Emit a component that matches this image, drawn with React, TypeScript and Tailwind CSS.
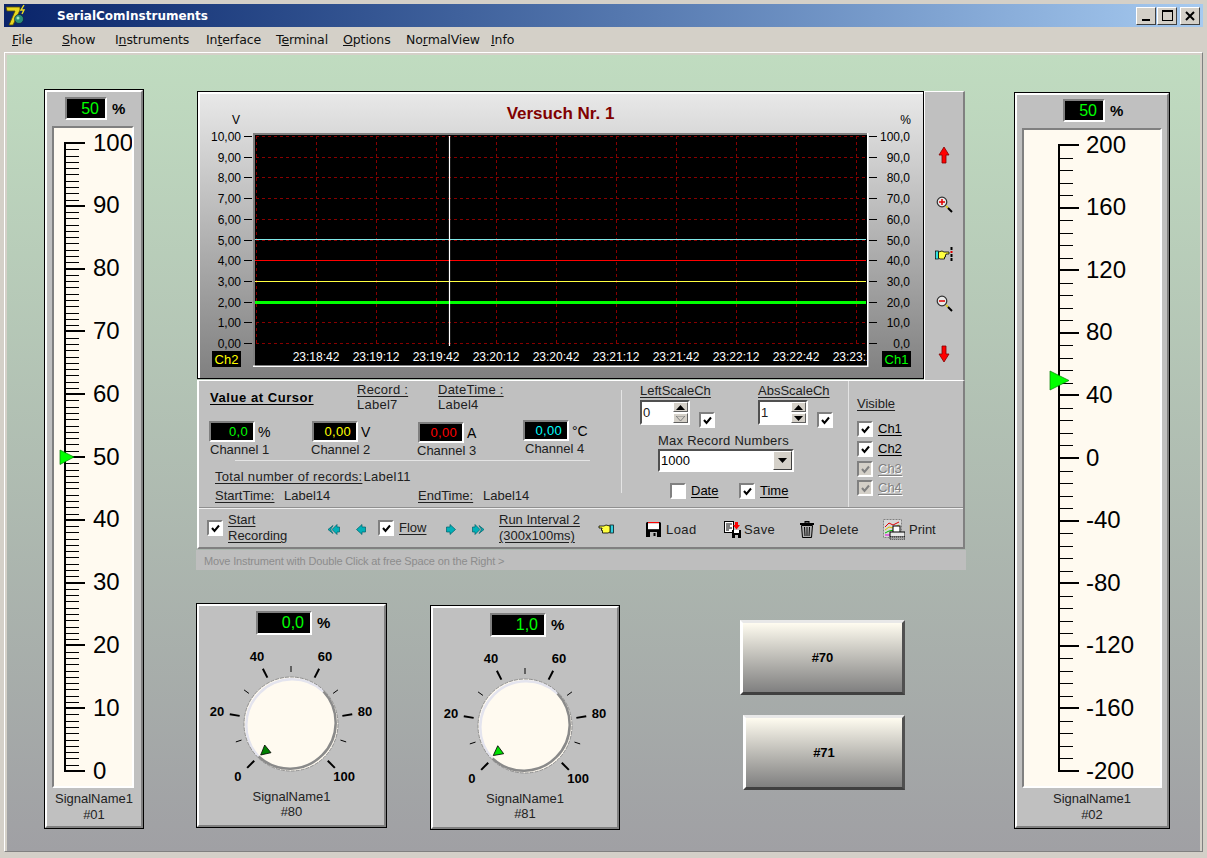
import React from "react";

const Check = ({ color = "#000" }: { color?: string }) => (
  <svg width="9" height="9" viewBox="0 0 9 9"><path d="M1 4 L3.5 7 L8 1.5" fill="none" stroke={color} strokeWidth="2" /></svg>
);

const CheckBox = ({ checked = true, disabled = false, className = "" }: { checked?: boolean; disabled?: boolean; className?: string }) => (
  <div className={`w-4 h-4 shrink-0 flex items-center justify-center border-2 border-t-[#808080] border-l-[#808080] border-r-white border-b-white ${disabled ? "bg-[#d4d0c8]" : "bg-white"} ${className}`}>
    {checked && <Check color={disabled ? "#808080" : "#000"} />}
  </div>
);

const Display = ({ value, color, w, h, size = "lg" }: { value: string; color: string; w: string; h: string; size?: "lg" | "sm" }) => (
  <div className={`${w} ${h} shrink-0 border-2 border-t-[#808080] border-l-[#808080] border-r-white border-b-white bg-black flex items-center justify-end ${size === "lg" ? "pr-[6px] text-[16px]" : "pr-[5px] text-[13px] tracking-[0.3px]"} ${color}`}>
    {value}
  </div>
);

const Panel = ({ className = "", children }: { className?: string; children: React.ReactNode }) => (
  <div className={`border border-black shrink-0 ${className}`}>
    <div className="h-full border-2 border-t-white border-l-white border-r-[#808080] border-b-[#808080] bg-[#c0c0c0] flex flex-col">{children}</div>
  </div>
);

type GaugeProps = {
  cls: string; valueMl: string; pt: string; box: string; vb: string;
  lineX: number; majorEnd: number; minorEnd: number; textX: number; top: number; bottom: number;
  labels: string[]; minors: number; pointer: string; svgW: number; svgH: number;
};

const Gauge = (p: GaugeProps) => {
  const majors = p.labels.length - 1;
  const step = (p.bottom - p.top) / (majors * p.minors);
  const ticks = Array.from({ length: majors * p.minors + 1 }, (_, i) => i);
  return (
    <Panel className={p.cls}>
      <div className={`flex items-center ${p.valueMl} ${p.pt}`}>
        <Display value="50" color="text-[#00ff00]" w="w-[42px]" h="h-[23px]" />
        <span className="ml-[5px] text-[15px] font-bold">%</span>
      </div>
      <div className={`${p.box} mt-[6px] border-2 border-t-[#808080] border-l-[#808080] border-r-white border-b-white bg-[#fffaf0]`}>
        <svg width={p.svgW} height={p.svgH} viewBox={p.vb} className="block">
          <rect x={p.lineX - 1} y={p.top - 1} width="2" height={p.bottom - p.top + 2} fill="#000" />
          {ticks.map((i) => (
            <rect key={i} x={p.lineX} y={Math.round(p.top + i * step) - (i % p.minors === 0 ? 1 : 0)} width={(i % p.minors === 0 ? p.majorEnd : p.minorEnd) - p.lineX} height={i % p.minors === 0 ? 2 : 1} fill="#000" />
          ))}
          {p.labels.map((l, i) => (
            <text key={l} x={p.textX} y={p.top + i * (p.bottom - p.top) / majors + 7.5} fontSize="24" fill="#000">{l}</text>
          ))}
          <polygon points={p.pointer} fill="#00ff00" stroke="#008000" strokeWidth="0.7" />
        </svg>
      </div>
      <div className="pt-[3px] text-center text-[13px] leading-[16px] text-[#222]">
        <div>SignalName1</div>
        <div>{p.labels[0] === "100" ? "#01" : "#02"}</div>
      </div>
    </Panel>
  );
};

const Dial = ({ value, num, display, ptr, cls }: { value: number; num: string; display: string; ptr: string; cls: string }) => {
  const pol = (a: number, r: number) => {
    const t = (a * Math.PI) / 180;
    return [r * Math.sin(t), -r * Math.cos(t)];
  };
  const angles = [0, 10, 20, 30, 40, 50, 60, 70, 80, 90, 100];
  return (
    <Panel className={cls}>
      <div className="flex items-center pt-[5px] pl-[57px]">
        <Display value={display} color="text-[#00ff00]" w="w-[56px]" h="h-[24px]" />
        <span className="ml-[5px] text-[15px] font-bold">%</span>
      </div>
      <svg width="185" height="150" viewBox="-92 -85 185 150" className="block mt-[4px]">
        {angles.map((v) => {
          const a = -135 + v * 2.7;
          const major = v % 20 === 0;
          const [x1, y1] = pol(a, 52);
          const [x2, y2] = pol(a, major ? 62 : 58);
          const [lx, ly] = pol(a, 75);
          return (
            <g key={v}>
              <line x1={x1} y1={y1} x2={x2} y2={y2} stroke="#000" strokeWidth={major ? 2 : 1} />
              {major && <text x={lx} y={ly + 4} textAnchor="middle" fontSize="13" fontWeight="700" fill="#000">{v}</text>}
            </g>
          );
        })}
        <circle r="47" fill="#fffaf0" />
        <path d="M -32.5 32.5 A 46 46 0 0 1 32.5 -32.5" fill="none" stroke="#e4e4ee" strokeWidth="2.5" />
        <path d="M 32.5 -32.5 A 46 46 0 0 1 -32.5 32.5" fill="none" stroke="#8a8a8a" strokeWidth="2.5" />
        <circle r="47" fill="none" stroke="#909090" strokeWidth="1" strokeDasharray="4 1" />
        <polygon points="-30.3,31 -26.3,21 -20,28.7" transform={`rotate(${value * 2.7})`} fill={ptr} stroke="#000" strokeWidth="0.8" />
      </svg>
      <div className="text-center text-[13px] leading-[15px] text-[#222]">
        <div>SignalName1</div>
        <div>{num}</div>
      </div>
    </Panel>
  );
};

const Logo = () => (
  <svg width="24" height="23" viewBox="0 0 24 23" className="shrink-0">
    <path d="M2 3 H16 V6 L9 21 H5 L11 7 H3 Z" fill="#e8d820" stroke="#5a5000" strokeWidth="0.8" />
    <path d="M20 1 L17 6 H20 L18 10" fill="none" stroke="#f0e020" strokeWidth="1.4" />
    <circle cx="15" cy="15" r="4.5" fill="#2a9078" stroke="#113" strokeWidth="0.6" />
    <circle cx="14" cy="14" r="1.5" fill="#9fe0c0" />
  </svg>
);

const ArrowV = ({ up }: { up?: boolean }) => (
  <svg width="12" height="18" viewBox="0 0 12 18" className="block">
    <path d={up ? "M6 1 L11 9 H8 V17 H4 V9 H1 Z" : "M6 17 L11 9 H8 V1 H4 V9 H1 Z"} fill="#ff0000" stroke="#800000" strokeWidth="0.8" />
  </svg>
);

const Magnifier = ({ plus }: { plus?: boolean }) => (
  <svg width="17" height="17" viewBox="0 0 17 17" className="block">
    <line x1="10" y1="10" x2="12" y2="12" stroke="#d8c820" strokeWidth="2" />
    <line x1="12" y1="12" x2="16" y2="16" stroke="#000" strokeWidth="2" />
    <circle cx="6" cy="6" r="4.8" fill="#e8e8e8" stroke="#303030" strokeWidth="1.2" />
    <line x1="3" y1="6" x2="9" y2="6" stroke="#e00000" strokeWidth="1.5" />
    {plus && <line x1="6" y1="3" x2="6" y2="9" stroke="#e00000" strokeWidth="1.5" />}
  </svg>
);

const HandRight = () => (
  <svg width="18" height="15" viewBox="0 0 18 15" className="block">
    <rect x="0.5" y="4" width="3" height="8" fill="#30e0e0" stroke="#000" strokeWidth="0.7" />
    <path d="M3.5 5 L7 4 L9 5 H14 V7 H11 V8 H10.5 V10 H9.5 V12 H5 L3.5 11 Z" fill="#ffff40" stroke="#000" strokeWidth="0.8" />
    <rect x="15.5" y="0" width="2" height="3" fill="#000" />
    <rect x="15.5" y="4" width="2" height="2" fill="#e00000" />
    <rect x="15.5" y="7" width="2" height="3" fill="#000" />
    <rect x="15.5" y="11" width="2" height="3" fill="#000" />
  </svg>
);

const HandLeft = () => (
  <svg width="16" height="12" viewBox="0 0 16 12" className="block shrink-0 ml-[19px] mt-[2px]">
    <rect x="12" y="2" width="3.5" height="8" fill="#30d0e0" stroke="#000" strokeWidth="0.7" />
    <path d="M12 3 L8 2 L6 3 H1 V5 H4 V6 H3.5 V7.5 H4.5 V10 H10 L12 9 Z" fill="#ffff40" stroke="#000" strokeWidth="0.8" />
  </svg>
);

const Teal = ({ dir, double, ml }: { dir: "l" | "r"; double?: boolean; ml: string }) => (
  <svg width={double ? 13 : 10} height="11" viewBox={double ? "0 0 13 11" : "0 0 10 11"} className={`block shrink-0 mt-[2px] ${ml}`}>
    <g transform={dir === "l" ? `translate(${double ? 13 : 10},0) scale(-1,1)` : undefined}>
      {double ? (
        <>
          <path d="M0.5 3 H3 V0.5 L8 5.5 L3 10.5 V8 H0.5 Z" fill="#00b0b8" stroke="#006068" strokeWidth="0.7" />
          <path d="M7 1.5 L12 5.5 L7 9.5 L9.5 5.5 Z" fill="#00b0b8" stroke="#006068" strokeWidth="0.7" />
        </>
      ) : (
        <path d="M0.5 3 H4 V0.5 L9.5 5.5 L4 10.5 V8 H0.5 Z" fill="#00b0b8" stroke="#006068" strokeWidth="0.7" />
      )}
    </g>
  </svg>
);

const Floppy = ({ className = "" }: { className?: string }) => (
  <svg width="15" height="15" viewBox="0 0 15 15" className={`block shrink-0 mt-[3px] ${className}`}>
    <path d="M0 1 L1 0 H14 L15 1 V15 H0 Z" fill="#000" />
    <rect x="2" y="0" width="11" height="1.2" fill="#ff0000" />
    <rect x="2" y="1.2" width="11" height="6" fill="#fff" />
    <rect x="4" y="10" width="7" height="5" fill="#b8b8b8" />
    <rect x="7.5" y="11" width="2" height="3" fill="#000" />
  </svg>
);

const SaveIcon = () => (
  <svg width="17" height="17" viewBox="0 0 17 17" className="block shrink-0 ml-[27px] mt-[3px]">
    <rect x="0.5" y="0.5" width="9" height="11" fill="#fff" stroke="#000" />
    <path d="M2 3 H8 M2 5 H6 M2 7 H8 M2 9 H5" stroke="#000" strokeWidth="1" />
    <rect x="8" y="9" width="9" height="8" fill="#000" />
    <rect x="10" y="9" width="5" height="3" fill="#fff" />
    <rect x="11" y="14" width="3" height="3" fill="#c0c0c0" />
    <path d="M11 1 H14 V4 H16 L12.5 8.5 L9 4 H11 Z" fill="#ff0000" />
  </svg>
);

const Trash = () => (
  <svg width="14" height="17" viewBox="0 0 14 17" className="block shrink-0 ml-[24px] mt-[3px]">
    <rect x="5" y="0.5" width="4" height="1.5" fill="none" stroke="#000" />
    <rect x="0" y="2" width="14" height="2" fill="#000" />
    <path d="M1.5 4.5 H12.5 L11.5 16.5 H2.5 Z" fill="#b0b0b0" stroke="#000" />
    <path d="M4.5 6 L5 15 M7 6 V15 M9.5 6 L9 15" stroke="#000" />
  </svg>
);

const PrintIcon = () => (
  <svg width="22" height="21" viewBox="0 0 22 21" className="block shrink-0 ml-[24px] mt-[3px]">
    <rect x="0.5" y="0.5" width="18" height="18" fill="#d8d8d8" stroke="#808080" strokeDasharray="2 1" />
    <path d="M2 8 L6 4 L10 6 L16 3" stroke="#e00000" fill="none" />
    <path d="M2 11 L6 8 L10 9 L16 6" stroke="#d8c000" fill="none" />
    <path d="M2 14 L6 12 L16 10" stroke="#00c000" fill="none" />
    <path d="M2 16 H16" stroke="#e000e0" />
    <rect x="10" y="7" width="7" height="7" fill="#fff" stroke="#000" />
    <rect x="7" y="13" width="15" height="5" fill="#e8e8e8" stroke="#000" />
    <rect x="7" y="18" width="15" height="3" fill="#a0a0a0" stroke="#000" strokeWidth="0.7" strokeDasharray="1 1" />
  </svg>
);

const SpinBtn = ({ up, disabled }: { up?: boolean; disabled?: boolean }) => (
  <div className="w-[15px] h-[10px] bg-[#d4d0c8] border border-t-white border-l-white border-r-[#606060] border-b-[#606060] flex items-center justify-center">
    <svg width="9" height="5" viewBox="0 0 9 5" className="block">
      <polygon points={up ? "4.5,0 9,5 0,5" : "0,0 9,0 4.5,5"} fill={disabled ? "none" : "#000"} stroke={disabled ? "#808080" : "none"} />
    </svg>
  </div>
);

const Spin = ({ value, downDisabled }: { value: string; downDisabled?: boolean }) => (
  <div className="w-[50px] h-[25px] border-2 border-t-[#505050] border-l-[#505050] border-r-white border-b-white bg-white flex items-center justify-between">
    <span className="pl-[1px] text-[13px]">{value}</span>
    <div className="flex flex-col gap-[1px]">
      <SpinBtn up />
      <SpinBtn disabled={downDisabled} />
    </div>
  </div>
);

const U = ({ children, className = "" }: { children: React.ReactNode; className?: string }) => (
  <span className={`underline underline-offset-2 ${className}`}>{children}</span>
);

const Channel = ({ value, color, unit, name, cls, dispMl, labelMl, mt }: { value: string; color: string; unit: string; name: string; cls: string; dispMl: string; labelMl: string; mt: string }) => (
  <div className={`${cls} ${mt} shrink-0`}>
    <div className={`flex items-center ${dispMl}`}>
      <Display value={value} color={color} w="w-[46px]" h="h-[21px]" size="sm" />
      <span className="ml-[3px] text-[14px] leading-[14px]">{unit}</span>
    </div>
    <div className={`text-[13px] leading-[15px] text-[#202020] ${labelMl}`}>{name}</div>
  </div>
);

const yLeft = ["10,00", "9,00", "8,00", "7,00", "6,00", "5,00", "4,00", "3,00", "2,00", "1,00", "0,00"];
const yRight = ["100,0", "90,0", "80,0", "70,0", "60,0", "50,0", "40,0", "30,0", "20,0", "10,0", "0,0"];
const times = ["23:18:42", "23:19:12", "23:19:42", "23:20:12", "23:20:42", "23:21:12", "23:21:42", "23:22:12", "23:22:42", "23:23:12"];

const ChartSvg = () => {
  const ys = [136, 157, 177, 198, 219, 240, 260, 281, 302, 322, 343];
  const xs = [256, 316, 376, 436, 496, 556, 616, 676, 736, 796, 856];
  return (
    <svg width="723" height="251" viewBox="200 127 723 251" className="block">
      <defs>
        <clipPath id="plotclip"><rect x="255" y="135" width="612" height="231" /></clipPath>
      </defs>
      <rect x="253" y="133" width="615" height="234" fill="#000" />
      <rect x="253" y="133" width="615" height="2" fill="#808080" />
      <rect x="253" y="133" width="2" height="234" fill="#808080" />
      <rect x="253" y="365.5" width="615" height="1.5" fill="#fff" />
      <rect x="867" y="133" width="1.5" height="234" fill="#fff" />
      {ys.map((y) => <line key={y} x1="256" x2="866" y1={y + 0.5} y2={y + 0.5} stroke="#880000" strokeDasharray="3 3" />)}
      {xs.map((x) => <line key={x} x1={x + 0.5} x2={x + 0.5} y1="136" y2="344" stroke="#880000" strokeDasharray="3 3" />)}
      <rect x="255" y="239" width="611" height="1" fill="#80e8e8" />
      <rect x="255" y="260" width="611" height="1" fill="#ff0000" />
      <rect x="255" y="281" width="611" height="1" fill="#ffff40" />
      <rect x="255" y="301" width="611" height="3" fill="#00ff00" />
      <line x1="449.5" x2="449.5" y1="136" y2="346" stroke="#fff" strokeWidth="1.2" />
      <g clipPath="url(#plotclip)">
        {times.map((t, i) => <text key={t} x={316 + i * 60} y="361" textAnchor="middle" fontSize="12" fill="#fff">{t}</text>)}
      </g>
      {ys.map((y, i) => (
        <g key={y}>
          <rect x="244" y={y} width="8" height="1" fill="#000" />
          <text x="241" y={y + 5} textAnchor="end" fontSize="12" fill="#000">{yLeft[i]}</text>
          <rect x="869" y={y} width="8" height="1" fill="#000" />
          <text x="910" y={y + 5} textAnchor="end" fontSize="12" fill="#000">{yRight[i]}</text>
        </g>
      ))}
      <rect x="212" y="351" width="29" height="16" fill="#000" />
      <text x="226.5" y="364" textAnchor="middle" fontSize="13" fill="#ffff00">Ch2</text>
      <rect x="882" y="351" width="29" height="16" fill="#000" />
      <text x="896.5" y="364" textAnchor="middle" fontSize="13" fill="#00ff00">Ch1</text>
    </svg>
  );
};

const menus: [string, string, string, string][] = [
  ["", "F", "ile", "ml-[8px] w-[50px]"],
  ["", "S", "how", "w-[53px]"],
  ["I", "n", "struments", "w-[91px]"],
  ["In", "t", "erface", "w-[70px]"],
  ["T", "e", "rminal", "w-[67px]"],
  ["", "O", "ptions", "w-[63px]"],
  ["No", "r", "malView", "w-[85px]"],
  ["", "I", "nfo", ""],
];

const WinBtn = ({ children, cls = "" }: { children: React.ReactNode; cls?: string }) => (
  <div className={`w-[20px] h-[18px] bg-[#d4d0c8] border border-t-white border-l-white border-r-[#404040] border-b-[#404040] flex items-center justify-center ${cls}`}>{children}</div>
);

export default function App() {
  return (
    <div className="w-[1207px] h-[858px] bg-[#d4d0c8] overflow-hidden text-[13px] leading-[16px] text-black [font-family:'Liberation_Sans',Arial,sans-serif] flex flex-col pt-[4px] px-[4px] pb-[6px]">
      {/* title bar */}
      <div className="h-[23px] shrink-0 flex items-center bg-gradient-to-r from-[#0a246a] to-[#a6caf0]">
        <Logo />
        <span className="ml-[29px] text-[12px] font-bold [font-family:'DejaVu_Sans',sans-serif] text-white">SerialComInstruments</span>
        <div className="ml-auto mr-[3px] flex">
          <WinBtn>
            <div className="w-[8px] h-[2px] bg-black mt-[9px]" />
          </WinBtn>
          <WinBtn cls="ml-[1px]">
            <div className="w-[11px] h-[11px] border border-black border-t-2" />
          </WinBtn>
          <WinBtn cls="ml-[3px]">
            <svg width="10" height="10" viewBox="0 0 10 10"><path d="M1 1 L9 9 M9 1 L1 9" stroke="#000" strokeWidth="2" /></svg>
          </WinBtn>
        </div>
      </div>
      {/* menu */}
      <div className="h-[25px] shrink-0 flex items-center text-[12.5px] [font-family:'DejaVu_Sans',sans-serif] tracking-[-0.1px] text-[#101010]">
        <div className="flex">
          {menus.map(([a, b, c, cls]) => (
            <span key={a + b + c} className={`whitespace-nowrap ${cls}`}>
              {a}<span className="underline">{b}</span>{c}
            </span>
          ))}
        </div>
      </div>
      {/* client */}
      <div className="flex-1 min-h-0 border border-t-white border-l-white border-r-[#808080] border-b-[#808080]">
        <div className="h-full border-2 border-b-0 border-[#d4d0c8]">
          <div className="h-full bg-gradient-to-b from-[#c0dcc0] to-[#a0a0a4] flex items-start">
            <Gauge
              cls="w-[100px] h-[740px] ml-[37px] mt-[34px]"
              valueMl="ml-[18px]"
              pt="pt-[5px]"
              box="ml-[5px] w-[82px]"
              vb="54 128 78 658"
              svgW={78}
              svgH={658}
              lineX={65}
              majorEnd={85}
              minorEnd={79}
              textX={93}
              top={143}
              bottom={771}
              labels={["100", "90", "80", "70", "60", "50", "40", "30", "20", "10", "0"]}
              minors={10}
              pointer="60,450 74,457 60,464.5"
            />
            <div className="w-[770px] ml-[52px] shrink-0">
              <div className="h-[289px] mt-[36px] ml-[1px] flex">
                <div className="w-[727px] h-[288px] border border-black">
                  <div className="h-full border-l-2 border-t-2 border-white bg-gradient-to-b from-[#e8e8e8] to-[#808080]">
                    <div className="h-[33px] grid grid-cols-[1fr_auto_1fr] text-[17px]">
                      <div className="pl-[32px] pt-[19px] text-[12px] leading-[14px]">V</div>
                      <div className="pt-[11px] -ml-[2px] font-bold text-[#800000] leading-[18px]">Versuch Nr. 1</div>
                      <div className="text-right pr-[12px] pt-[19px] text-[12px] leading-[14px]">%</div>
                    </div>
                    <ChartSvg />
                  </div>
                </div>
                <div className="w-[41px] h-[289px] border-l border-t border-l-white border-t-white border-r-2 border-r-[#808080] bg-[#c0c0c0] flex flex-col items-center pt-[54px]">
                  <ArrowV up />
                  <div className="mt-[32px]"><Magnifier plus /></div>
                  <div className="mt-[34px]"><HandRight /></div>
                  <div className="mt-[33px]"><Magnifier /></div>
                  <div className="mt-[33px]"><ArrowV /></div>
                </div>
              </div>
              {/* lower panel */}
              <div className="ml-[1px] w-[768px] h-[169px] border-t border-t-white border-l-2 border-l-white border-r-2 border-r-[#808080] border-b-2 border-b-[#808080] bg-[#c0c0c0] flex flex-col">
                <div className="h-[127px] flex border-b border-b-[#909090] shadow-[0_1px_0_#eee] shrink-0">
                  {/* section A */}
                  <div className="w-[422px] shrink-0 pl-[11px]">
                    <div className="flex h-[30px] mt-[1px] leading-[15px] text-[#202020] tracking-[0.25px]">
                      <div className="w-[147px] font-bold self-center tracking-[0.55px] text-black"><U>Value at Cursor</U></div>
                      <div className="w-[81px]"><U>Record :</U><div>Label7</div></div>
                      <div><U>DateTime :</U><div>Label4</div></div>
                    </div>
                    <div className="flex mt-[8px] -ml-[1px]">
                      <Channel value="0,0" color="text-[#00ff00]" unit="%" name="Channel 1" cls="w-[102px]" dispMl="ml-0" labelMl="ml-[1px]" mt="mt-[1px]" />
                      <Channel value="0,00" color="text-[#ffff00]" unit="V" name="Channel 2" cls="w-[106px]" dispMl="ml-[1px]" labelMl="" mt="mt-[1px]" />
                      <Channel value="0,00" color="text-[#ff0000]" unit="A" name="Channel 3" cls="w-[106px]" dispMl="ml-[1px]" labelMl="" mt="mt-[2px]" />
                      <Channel value="0,00" color="text-[#00ffff]" unit="°C" name="Channel 4" cls="w-[100px]" dispMl="" labelMl="ml-[2px]" mt="mt-0" />
                    </div>
                    <div className="ml-[25px] w-[355px] h-px bg-[#e4e4e4] mt-[2px]" />
                    <div className="ml-[5px] mt-[8px] flex leading-[15px] text-[#202020] tracking-[0.3px]">
                      <U>Total number of records:</U><span className="ml-[1px]">Label11</span>
                    </div>
                    <div className="ml-[5px] mt-[4px] flex leading-[15px] text-[#202020]">
                      <div className="w-[69px]"><U>StartTime:</U></div>
                      <div className="w-[134px]">Label14</div>
                      <div className="w-[65px]"><U>EndTime:</U></div>
                      <div>Label14</div>
                    </div>
                  </div>
                  {/* section B */}
                  <div className="w-[227px] shrink-0 flex">
                    <div className="w-px h-[103px] mt-[9px] bg-[#e4e4e4] shrink-0" />
                    <div className="flex-1">
                      <div className="flex pt-[2px] text-[#202020]">
                        <div className="ml-[18px] w-[118px] shrink-0">
                          <U>LeftScaleCh</U>
                          <div className="flex mt-px">
                            <Spin value="0" downDisabled />
                            <CheckBox className="ml-[9px] mt-[12px]" />
                          </div>
                        </div>
                        <div className="w-[90px] shrink-0">
                          <U>AbsScaleCh</U>
                          <div className="flex mt-px">
                            <Spin value="1" />
                            <CheckBox className="ml-[9px] mt-[12px]" />
                          </div>
                        </div>
                      </div>
                      <div className="ml-[36px] mt-[5px] text-[#202020] tracking-[0.25px]">Max Record Numbers</div>
                      <div className="ml-[36px] w-[136px] h-[23px] border-2 border-t-[#505050] border-l-[#505050] border-r-white border-b-white bg-white flex items-center justify-between">
                        <span className="pl-[1px]">1000</span>
                        <div className="w-[19px] h-[19px] bg-[#d4d0c8] border border-t-white border-l-white border-r-[#404040] border-b-[#404040] flex items-center justify-center">
                          <svg width="9" height="5" viewBox="0 0 9 5"><polygon points="0,0 9,0 4.5,5" fill="#000" /></svg>
                        </div>
                      </div>
                      <div className="flex items-center ml-[48px] mt-[11px]">
                        <div className="w-[69px] flex items-center shrink-0">
                          <CheckBox checked={false} />
                          <U className="ml-[5px]">Date</U>
                        </div>
                        <CheckBox />
                        <U className="ml-[5px]">Time</U>
                      </div>
                    </div>
                  </div>
                  {/* section C */}
                  <div className="flex-1 border-l border-l-[#e4e4e4] pl-[8px] pt-[15px]">
                    <div className="text-[#202020]"><U>Visible</U></div>
                    <div className="flex items-center mt-[9px]"><CheckBox /><U className="ml-[5px]">Ch1</U></div>
                    <div className="flex items-center mt-[4px]"><CheckBox /><U className="ml-[5px]">Ch2</U></div>
                    <div className="flex items-center mt-[4px] text-[#808080] [text-shadow:1px_1px_0_#fff]"><CheckBox disabled /><U className="ml-[5px]">Ch3</U></div>
                    <div className="flex items-center mt-[3px] text-[#808080] [text-shadow:1px_1px_0_#fff]"><CheckBox disabled /><U className="ml-[5px]">Ch4</U></div>
                  </div>
                </div>
                {/* tool strip */}
                <div className="flex-1 flex items-center text-[#202020] mt-px">
                  <CheckBox className="ml-[8px]" />
                  <div className="ml-[5px] w-[63px] shrink-0"><U>Start</U><br /><U>Recording</U></div>
                  <Teal dir="l" double ml="ml-[36px]" />
                  <Teal dir="l" ml="ml-[16px]" />
                  <CheckBox className="ml-[12px]" />
                  <div className="ml-[5px] w-[28px] shrink-0"><U>Flow</U></div>
                  <Teal dir="r" ml="ml-[19px]" />
                  <Teal dir="r" double ml="ml-[16px]" />
                  <div className="ml-[14px] w-[80px] shrink-0 whitespace-nowrap"><U>Run Interval 2</U><br /><U>(300x100ms)</U></div>
                  <HandLeft />
                  <Floppy className="ml-[32px]" />
                  <div className="ml-[5px] w-[31px] shrink-0 tracking-[0.4px] mt-[3px]">Load</div>
                  <SaveIcon />
                  <div className="ml-[3px] w-[32px] shrink-0 tracking-[0.4px] mt-[3px]">Save</div>
                  <Trash />
                  <div className="ml-[5px] w-[40px] shrink-0 tracking-[0.4px] mt-[3px]">Delete</div>
                  <PrintIcon />
                  <div className="ml-[4px] shrink-0 mt-[3px]">Print</div>
                </div>
              </div>
              <div className="mt-[1px] h-[20px] bg-[#bebebe] pl-[8px] text-[11px] leading-[22px] tracking-[-0.15px] text-[#8c8c8c] whitespace-nowrap">
                Move Instrument with Double Click at free Space on the Right &gt;
              </div>
              <div className="flex items-start mt-[33px]">
                <Dial cls="w-[191px] h-[225px]" value={0} num="#80" display="0,0" ptr="#008000" />
                <Dial cls="w-[190px] h-[225px] ml-[43px] mt-[2px]" value={1} num="#81" display="1,0" ptr="#00e000" />
                <div className="ml-[120px] mt-[17px] flex flex-col items-end">
                  <div className="w-[165px] h-[75px] border-[3px] border-t-[#e8e8e8] border-l-white border-r-[#505050] border-b-[#404040] bg-gradient-to-b from-[#fffcf0] to-[#808080] flex items-center justify-center font-bold">#70</div>
                  <div className="w-[162px] h-[75px] mt-[20px] border-[3px] border-t-[#e8e8e8] border-l-white border-r-[#505050] border-b-[#404040] bg-gradient-to-b from-[#fffcf0] to-[#808080] flex items-center justify-center font-bold">#71</div>
                </div>
              </div>
            </div>
            <Gauge
              cls="w-[156px] h-[737px] ml-[48px] mt-[37px]"
              valueMl="ml-[46px]"
              pt="pt-[4px]"
              box="ml-[5px] w-[140px]"
              vb="1024 130 136 656"
              svgW={136}
              svgH={656}
              lineX={1059}
              majorEnd={1079}
              minorEnd={1073}
              textX={1086}
              top={145}
              bottom={771}
              labels={["200", "160", "120", "80", "40", "0", "-40", "-80", "-120", "-160", "-200"]}
              minors={5}
              pointer="1050,371 1069,380.5 1050,390"
            />
          </div>
        </div>
      </div>
    </div>
  );
}
